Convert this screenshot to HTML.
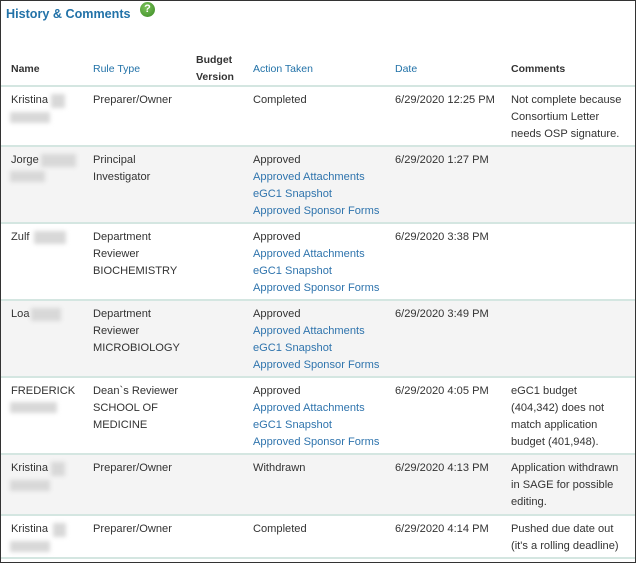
<!DOCTYPE html><html><head><style>
body{margin:0;width:636px;height:563px;overflow:hidden;background:#fff;font-family:"Liberation Sans",Arial,sans-serif;font-size:11.1px;color:#333}
#f{position:absolute;left:0;top:0;width:634px;height:561px;border:1px solid #333;overflow:hidden}
.t{position:absolute;left:5px;top:6px;font-size:12.6px;font-weight:bold;color:#2272a8}
.q{position:absolute;left:139px;top:1px;width:15px;height:15px;border-radius:50%;background:radial-gradient(circle at 40% 35%,#7cc35a,#3a8a24);color:#fff;font-weight:bold;font-size:11px;text-align:center;line-height:15px}
.c{position:absolute;line-height:17px;white-space:nowrap;margin-top:1px}
.h{font-weight:bold;font-size:10.5px;color:#333}
.hb{font-size:10.5px;color:#2272a8}
.r{position:absolute;left:0;width:634px;border-top:2px solid #d4e6e1}
.g{background:#f4f4f4}
a{color:#2f74ad;text-decoration:none}
.bl{position:absolute;background:#d8d8d8;filter:blur(2px)}
</style></head><body><div id="f">
<div class="t">History &amp; Comments</div><div class="q">?</div>
<div class="c h" style="left:10px;top:59px">Name</div>
<div class="c hb" style="left:92px;top:59px">Rule Type</div>
<div class="c h" style="left:195px;top:50px;line-height:17px">Budget<br>Version</div>
<div class="c hb" style="left:252px;top:59px">Action Taken</div>
<div class="c hb" style="left:394px;top:59px">Date</div>
<div class="c h" style="left:510px;top:59px">Comments</div>

<div class="r" style="top:84px;height:60px"></div>
<div class="r g" style="top:144px;height:75px"></div>
<div class="r" style="top:221px;height:75px"></div>
<div class="r g" style="top:298px;height:75px"></div>
<div class="r" style="top:375px;height:75px"></div>
<div class="r g" style="top:452px;height:59px"></div>
<div class="r" style="top:513px;height:41px"></div>
<div class="r" style="top:556px;height:5px"></div>

<div class="c" style="left:10px;top:90px">Kristina</div><div class="bl" style="left:50px;top:93px;width:14px;height:14px"></div><div class="bl" style="left:9px;top:111px;width:40px;height:11px"></div>
<div class="c" style="left:92px;top:90px">Preparer/Owner</div>
<div class="c" style="left:252px;top:90px">Completed</div>
<div class="c" style="left:394px;top:90px">6/29/2020 12:25 PM</div>
<div class="c" style="left:510px;top:90px">Not complete because<br>Consortium Letter<br>needs OSP signature.</div>

<div class="c" style="left:10px;top:150px">Jorge</div><div class="bl" style="left:40px;top:153px;width:35px;height:13px"></div><div class="bl" style="left:9px;top:170px;width:35px;height:11px"></div>
<div class="c" style="left:92px;top:150px">Principal<br>Investigator</div>
<div class="c" style="left:252px;top:150px">Approved<br><a>Approved Attachments</a><br><a>eGC1 Snapshot</a><br><a>Approved Sponsor Forms</a></div>
<div class="c" style="left:394px;top:150px">6/29/2020 1:27 PM</div>

<div class="c" style="left:10px;top:227px">Zulf</div><div class="bl" style="left:33px;top:230px;width:32px;height:13px"></div>
<div class="c" style="left:92px;top:227px">Department<br>Reviewer<br>BIOCHEMISTRY</div>
<div class="c" style="left:252px;top:227px">Approved<br><a>Approved Attachments</a><br><a>eGC1 Snapshot</a><br><a>Approved Sponsor Forms</a></div>
<div class="c" style="left:394px;top:227px">6/29/2020 3:38 PM</div>

<div class="c" style="left:10px;top:304px">Loa</div><div class="bl" style="left:30px;top:307px;width:30px;height:13px"></div>
<div class="c" style="left:92px;top:304px">Department<br>Reviewer<br>MICROBIOLOGY</div>
<div class="c" style="left:252px;top:304px">Approved<br><a>Approved Attachments</a><br><a>eGC1 Snapshot</a><br><a>Approved Sponsor Forms</a></div>
<div class="c" style="left:394px;top:304px">6/29/2020 3:49 PM</div>

<div class="c" style="left:10px;top:381px">FREDERICK</div><div class="bl" style="left:9px;top:401px;width:47px;height:11px"></div>
<div class="c" style="left:92px;top:381px">Dean`s Reviewer<br>SCHOOL OF<br>MEDICINE</div>
<div class="c" style="left:252px;top:381px">Approved<br><a>Approved Attachments</a><br><a>eGC1 Snapshot</a><br><a>Approved Sponsor Forms</a></div>
<div class="c" style="left:394px;top:381px">6/29/2020 4:05 PM</div>
<div class="c" style="left:510px;top:381px">eGC1 budget<br>(404,342) does not<br>match application<br>budget (401,948).</div>

<div class="c" style="left:10px;top:458px">Kristina</div><div class="bl" style="left:50px;top:461px;width:14px;height:14px"></div><div class="bl" style="left:9px;top:479px;width:40px;height:11px"></div>
<div class="c" style="left:92px;top:458px">Preparer/Owner</div>
<div class="c" style="left:252px;top:458px">Withdrawn</div>
<div class="c" style="left:394px;top:458px">6/29/2020 4:13 PM</div>
<div class="c" style="left:510px;top:458px">Application withdrawn<br>in SAGE for possible<br>editing.</div>

<div class="c" style="left:10px;top:519px">Kristina</div><div class="bl" style="left:52px;top:522px;width:13px;height:14px"></div><div class="bl" style="left:9px;top:540px;width:40px;height:11px"></div>
<div class="c" style="left:92px;top:519px">Preparer/Owner</div>
<div class="c" style="left:252px;top:519px">Completed</div>
<div class="c" style="left:394px;top:519px">6/29/2020 4:14 PM</div>
<div class="c" style="left:510px;top:519px">Pushed due date out<br>(it's a rolling deadline)</div>
</div></body></html>
